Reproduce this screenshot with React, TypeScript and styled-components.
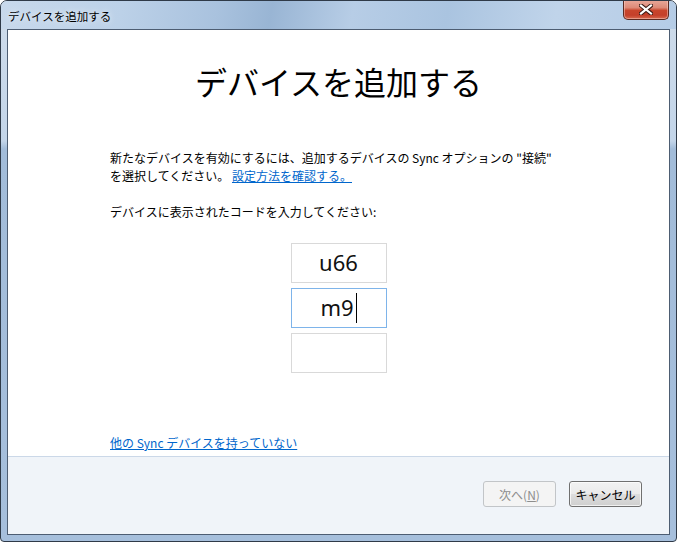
import * as React from 'react';
import styled, { createGlobalStyle } from 'styled-components';

const GlobalStyle = createGlobalStyle`
  html, body {
    margin: 0;
    padding: 0;
    background: #ffffff;
  }
  body {
    font-family: "Noto Sans CJK JP", "Noto Sans", sans-serif;
    color: #000000;
  }
`;

export default function App() {
  return (
    <>
      <GlobalStyle />
      <Window>
        <TitleBar>
          <WindowTitle>デバイスを追加する</WindowTitle>
          <CloseButton aria-label="閉じる">
            <svg width="14" height="11" viewBox="0 0 14 11">
              <path
                d="M2 1.5 L12 9.5 M12 1.5 L2 9.5"
                stroke="#3b1a14"
                strokeWidth="4.2"
                strokeLinecap="square"
              />
              <path
                d="M2 1.5 L12 9.5 M12 1.5 L2 9.5"
                stroke="#ffffff"
                strokeWidth="2.2"
                strokeLinecap="square"
              />
            </svg>
          </CloseButton>
        </TitleBar>
        <Client>
          <Body>
            <Heading>デバイスを追加する</Heading>
            <Paragraph>
              新たなデバイスを有効にするには、追加するデバイスの Sync オプションの "接続"
              <br />
              を選択してください。 <TextLink href="#">設定方法を確認する。</TextLink>
            </Paragraph>
            <Label>デバイスに表示されたコードを入力してください:</Label>
            <CodeList>
              <CodeBox>u66</CodeBox>
              <CodeBox $focused>
                m9
                <Caret />
              </CodeBox>
              <CodeBox />
            </CodeList>
            <BottomLink href="#">他の Sync デバイスを持っていない</BottomLink>
          </Body>
          <Footer>
            <DialogButton disabled>
              次へ(<u>N</u>)
            </DialogButton>
            <DialogButton>キャンセル</DialogButton>
          </Footer>
        </Client>
      </Window>
    </>
  );
}

const Window = styled.div`
  width: 677px;
  height: 542px;
  box-sizing: border-box;
  border: 1px solid #2f3a48;
  border-radius: 7px 7px 4px 4px;
  display: flex;
  flex-direction: column;
  overflow: hidden;
  background: linear-gradient(
    180deg,
    #cfdcea 0px,
    #c3d5e9 140px,
    #a2bcd9 148px,
    #a6bfdc 100%
  );
`;

const TitleBar = styled.div`
  height: 28px;
  flex: none;
  display: flex;
  justify-content: space-between;
  align-items: flex-start;
  padding: 0 7px 0 7px;
  background: linear-gradient(
    100deg,
    #c8d9ec 0%,
    #bcd1e8 18%,
    #a9c2de 32%,
    #99b5d4 40%,
    #b7cde6 52%,
    #aac4e0 66%,
    #c0d4ea 82%,
    #b5cce6 100%
  );
`;

const WindowTitle = styled.div`
  font-size: 11.5px;
  line-height: 28px;
  padding-top: 1px;
  color: #000000;
  text-shadow: 0 0 6px rgba(255, 255, 255, 0.9);
`;

const CloseButton = styled.button`
  width: 46px;
  height: 20px;
  margin-top: -1px;
  padding: 0;
  display: flex;
  align-items: center;
  justify-content: center;
  border: 1px solid #5a2a22;
  border-top: none;
  border-radius: 0 0 5px 5px;
  background: linear-gradient(
    180deg,
    #e9a99b 0%,
    #dd8a78 40%,
    #c8452c 55%,
    #c4402a 80%,
    #d6694f 100%
  );
  box-shadow: inset 0 0 0 1px rgba(255, 220, 210, 0.45);
`;

const Client = styled.div`
  flex: 1;
  margin: 0 6px 6px 6px;
  border: 1px solid #4d5d72;
  display: flex;
  flex-direction: column;
  min-height: 0;
`;

const Body = styled.div`
  flex: 1;
  background: #ffffff;
  display: flex;
  flex-direction: column;
  padding: 31px 0 4px 102px;
  border-bottom: 1px solid #cbd8e8;
`;

const Heading = styled.h1`
  margin: 0 0 48px -102px;
  font-size: 32px;
  font-weight: 400;
  line-height: 40px;
  text-align: center;
`;

const Paragraph = styled.p`
  margin: 0;
  font-size: 12px;
  line-height: 18px;
`;

const TextLink = styled.a`
  color: #0066cc;
  text-decoration: underline;
`;

const Label = styled.p`
  margin: 18px 0 22px 0;
  font-size: 12px;
  line-height: 18px;
`;

const CodeList = styled.div`
  display: flex;
  flex-direction: column;
  align-items: center;
  gap: 5px;
  margin-left: -102px;
`;

const CodeBox = styled.div<{ $focused?: boolean }>`
  width: 96px;
  height: 40px;
  box-sizing: border-box;
  padding-bottom: 3px;
  border: 1px solid ${p => (p.$focused ? '#7eb4ea' : '#d9d9d9')};
  display: flex;
  align-items: center;
  justify-content: center;
  font-family: "Noto Sans", "Open Sans", sans-serif;
  font-size: 22px;
  color: #111111;
`;

const Caret = styled.span`
  display: inline-block;
  width: 1px;
  height: 30px;
  margin: 3px 0 0 2px;
  background: #000000;
`;

const BottomLink = styled.a`
  margin-top: auto;
  align-self: flex-start;
  font-size: 12px;
  line-height: 18px;
  color: #0066cc;
  text-decoration: underline;
`;

const Footer = styled.div`
  flex: none;
  height: 77px;
  box-sizing: border-box;
  background: #f0f4f9;
  display: flex;
  justify-content: flex-end;
  align-items: flex-start;
  gap: 13px;
  padding: 24px 27px 0 0;
`;

const DialogButton = styled.button`
  width: 73px;
  height: 26px;
  padding: 0;
  font-family: "Noto Sans CJK JP", sans-serif;
  font-size: 12px;
  color: #000000;
  border: 1px solid #707070;
  border-radius: 3px;
  background: linear-gradient(180deg, #f2f2f2 0%, #ebebeb 48%, #dddddd 52%, #cfcfcf 100%);
  box-shadow: inset 0 0 0 1px rgba(255, 255, 255, 0.7);

  &:disabled {
    color: #8d8d8d;
    border-color: #c2c5c8;
    background: #f4f4f4;
    box-shadow: none;
  }
`;
